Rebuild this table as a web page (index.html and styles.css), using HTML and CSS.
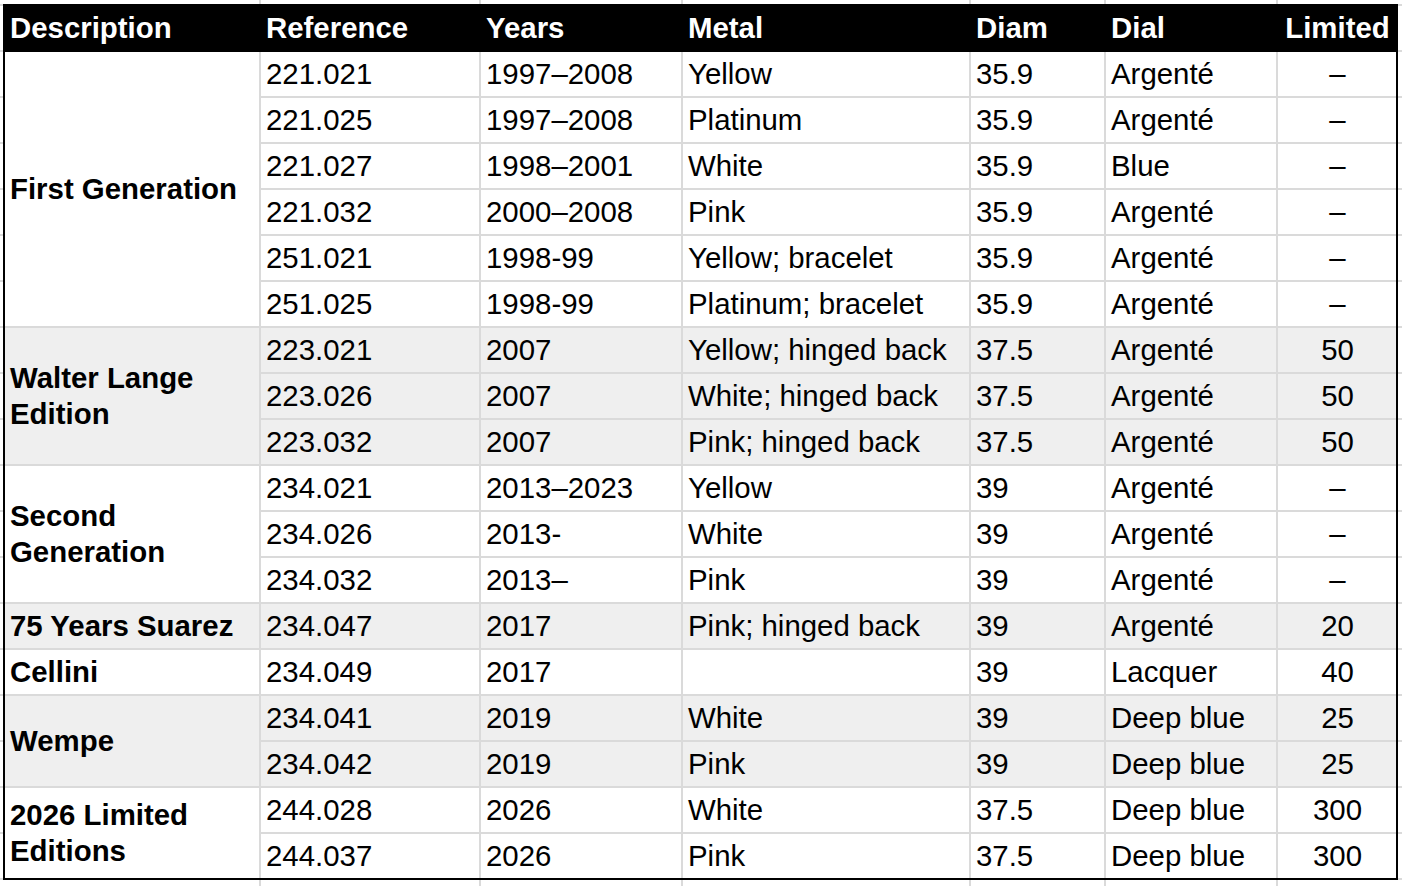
FILE: index.html
```html
<!DOCTYPE html>
<html lang="en">
<head>
<meta charset="utf-8">
<title>Watches</title>
<link rel="stylesheet" href="styles.css">
</head>
<body>
<div class="sheet">
  <div class="c h">Description</div><div class="c h">Reference</div><div class="c h">Years</div><div class="c h">Metal</div><div class="c h">Diam</div><div class="c h">Dial</div><div class="c h lim">Limited</div>

  <div class="c d s6">First Generation</div>
  <div class="c">221.021</div><div class="c">1997–2008</div><div class="c">Yellow</div><div class="c">35.9</div><div class="c">Argenté</div><div class="c lim">–</div>
  <div class="c">221.025</div><div class="c">1997–2008</div><div class="c">Platinum</div><div class="c">35.9</div><div class="c">Argenté</div><div class="c lim">–</div>
  <div class="c">221.027</div><div class="c">1998–2001</div><div class="c">White</div><div class="c">35.9</div><div class="c">Blue</div><div class="c lim">–</div>
  <div class="c">221.032</div><div class="c">2000–2008</div><div class="c">Pink</div><div class="c">35.9</div><div class="c">Argenté</div><div class="c lim">–</div>
  <div class="c">251.021</div><div class="c">1998-99</div><div class="c">Yellow; bracelet</div><div class="c">35.9</div><div class="c">Argenté</div><div class="c lim">–</div>
  <div class="c">251.025</div><div class="c">1998-99</div><div class="c">Platinum; bracelet</div><div class="c">35.9</div><div class="c">Argenté</div><div class="c lim">–</div>

  <div class="c d g s3">Walter Lange Edition</div>
  <div class="c g">223.021</div><div class="c g">2007</div><div class="c g">Yellow; hinged back</div><div class="c g">37.5</div><div class="c g">Argenté</div><div class="c g lim">50</div>
  <div class="c g">223.026</div><div class="c g">2007</div><div class="c g">White; hinged back</div><div class="c g">37.5</div><div class="c g">Argenté</div><div class="c g lim">50</div>
  <div class="c g">223.032</div><div class="c g">2007</div><div class="c g">Pink; hinged back</div><div class="c g">37.5</div><div class="c g">Argenté</div><div class="c g lim">50</div>

  <div class="c d s3">Second Generation</div>
  <div class="c">234.021</div><div class="c">2013–2023</div><div class="c">Yellow</div><div class="c">39</div><div class="c">Argenté</div><div class="c lim">–</div>
  <div class="c">234.026</div><div class="c">2013-</div><div class="c">White</div><div class="c">39</div><div class="c">Argenté</div><div class="c lim">–</div>
  <div class="c">234.032</div><div class="c">2013–</div><div class="c">Pink</div><div class="c">39</div><div class="c">Argenté</div><div class="c lim">–</div>

  <div class="c d g">75 Years Suarez</div>
  <div class="c g">234.047</div><div class="c g">2017</div><div class="c g">Pink; hinged back</div><div class="c g">39</div><div class="c g">Argenté</div><div class="c g lim">20</div>

  <div class="c d">Cellini</div>
  <div class="c">234.049</div><div class="c">2017</div><div class="c"></div><div class="c">39</div><div class="c">Lacquer</div><div class="c lim">40</div>

  <div class="c d g s2">Wempe</div>
  <div class="c g">234.041</div><div class="c g">2019</div><div class="c g">White</div><div class="c g">39</div><div class="c g">Deep blue</div><div class="c g lim">25</div>
  <div class="c g">234.042</div><div class="c g">2019</div><div class="c g">Pink</div><div class="c g">39</div><div class="c g">Deep blue</div><div class="c g lim">25</div>

  <div class="c d s2 last">2026 Limited Editions</div>
  <div class="c">244.028</div><div class="c">2026</div><div class="c">White</div><div class="c">37.5</div><div class="c">Deep blue</div><div class="c lim">300</div>
  <div class="c last">244.037</div><div class="c last">2026</div><div class="c last">Pink</div><div class="c last">37.5</div><div class="c last">Deep blue</div><div class="c last lim">300</div>
</div>
</body>
</html>
```

FILE: styles.css
```css
html, body {
  height: 100%;
}
body {
  margin: 0;
  overflow: hidden;
  background-color: #ffffff;
  background-image:
    linear-gradient(to right,
      transparent 259px, #dadada 259px, #dadada 261px, transparent 261px,
      transparent 479px, #dadada 479px, #dadada 481px, transparent 481px,
      transparent 681px, #dadada 681px, #dadada 683px, transparent 683px,
      transparent 969px, #dadada 969px, #dadada 971px, transparent 971px,
      transparent 1104px, #dadada 1104px, #dadada 1106px, transparent 1106px,
      transparent 1276px, #dadada 1276px, #dadada 1278px, transparent 1278px),
    linear-gradient(to bottom, #dadada 2px, transparent 2px);
  background-size: 100% 100%, 100% 46px;
  background-position: 0 0, 0 4px;
  background-repeat: no-repeat, repeat-y;
  font-family: "Liberation Sans", Arial, sans-serif;
  font-size: 29.4px;
  color: #000;
}
.sheet {
  display: grid;
  grid-template-columns: 256px 220px 202px 288px 135px 172px 118px;
  grid-template-rows: repeat(18, 46px) 44px;
  width: max-content;
  margin: 4px 0 0 3px;
  border: 2px solid #000;
  background: #fff;
}
.c {
  box-sizing: border-box;
  border-right: 2px solid #dadada;
  border-bottom: 2px solid #dadada;
  padding: 0 4px 0 5px;
  line-height: 43px;
  white-space: nowrap;
  overflow: hidden;
}
.h {
  background: #000;
  color: #fff;
  font-weight: bold;
  border-color: #000;
}
.lim {
  border-right: none;
  text-align: center;
}
.g {
  background: #efefef;
}
.last {
  border-bottom: none;
}
.d {
  font-weight: bold;
  white-space: normal;
  line-height: 36px;
  display: flex;
  align-items: center;
}
.s2 { grid-row: span 2; }
.s3 { grid-row: span 3; }
.s6 { grid-row: span 6; }
```
